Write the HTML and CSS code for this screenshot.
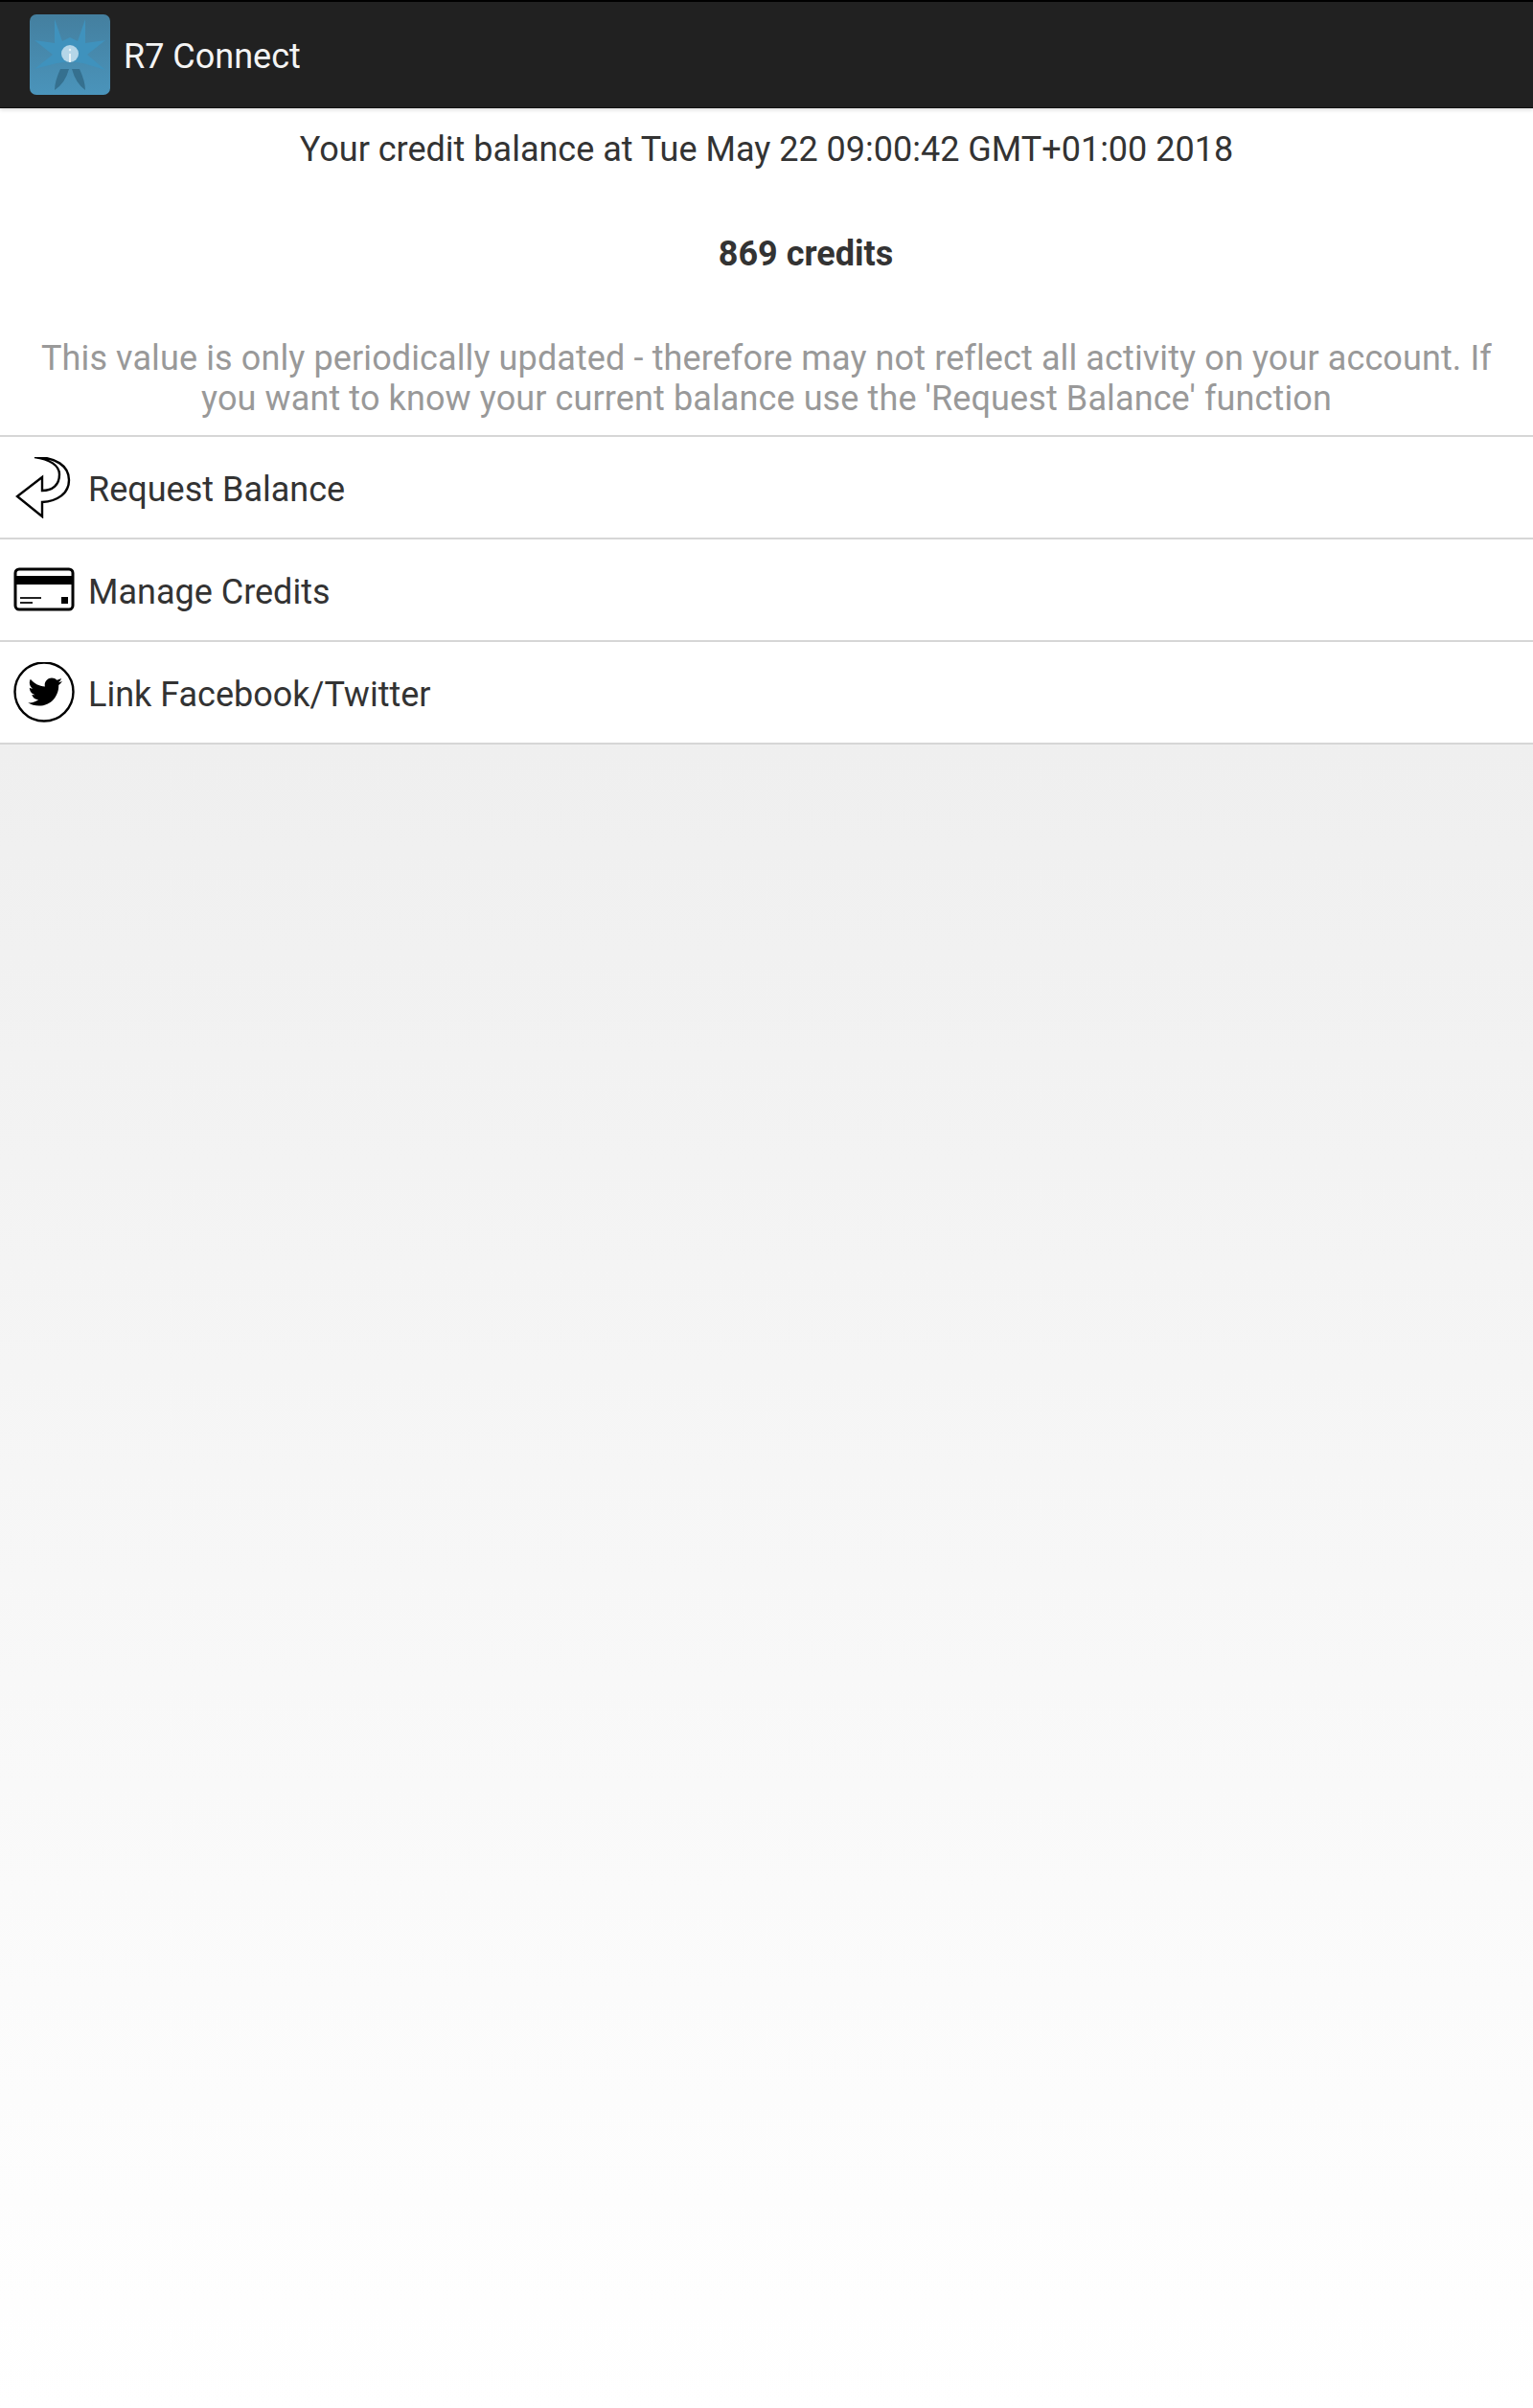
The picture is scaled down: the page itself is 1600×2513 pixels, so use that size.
FILE: index.html
```html
<!DOCTYPE html>
<html lang="en">
<head>
    <meta charset="UTF-8">
    <title>R7 Connect</title>
    <link rel="stylesheet" href="styles.css">
</head>
<body>
    <header class="app-bar">
        <svg class="app-logo" viewBox="0 0 84 84">
            <defs>
                <linearGradient id="logo-bg" x1="0" y1="0" x2="0" y2="1">
                    <stop offset="0" stop-color="#447f9f"/>
                    <stop offset="1" stop-color="#4a94bb"/>
                </linearGradient>
            </defs>
            <rect width="84" height="84" rx="7" fill="url(#logo-bg)"/>
            <path d="M26 5 L34 28 L42 24 L50 28 L58 5 L58 30 L79 27 L60 42 L79 58 L56 51 L42 49 L28 51 L5 57 L24 42 L5 27 L26 30 Z" fill="#3f92bd"/>
            <path d="M32 57 L41 57 Q37 72 26 79 Q26 70 32 57 Z M44 57 L52 57 Q58 70 58 79 Q48 72 44 57 Z" fill="#35708f"/>
            <circle cx="42" cy="41" r="9" fill="#b5d6e8"/>
            <rect x="41" y="41" width="2" height="9" fill="#e8f3f8"/>
            <circle cx="42" cy="37" r="1.2" fill="#e8f3f8"/>
        </svg>
        <span class="app-title">R7 Connect</span>
    </header>

    <main>
        <section class="balance">
            <p class="balance-date">Your credit balance at Tue May 22 09:00:42 GMT+01:00 2018</p>
            <p class="balance-value">869 credits</p>
            <p class="balance-note">This value is only periodically updated - therefore may not reflect all activity on your account. If you want to know your current balance use the 'Request Balance' function</p>
        </section>

        <ul class="menu">
            <li class="menu-row">
                <svg class="menu-icon" viewBox="0 0 64 64">
                    <path d="M22 0 C44 0 58 9 58 24 C58 38 46 46 30 47 L30 62 L4 41 L30 21 L30 35 C41 35 48 29 48 18 C48 9 38 2 22 0 Z" fill="#fff" stroke="#000" stroke-width="2.4"/>
                </svg>
                <span>Request Balance</span>
            </li>
            <li class="menu-row">
                <svg class="menu-icon" viewBox="0 0 64 64">
                    <rect x="2" y="10" width="60" height="42" rx="4" fill="#fff" stroke="#000" stroke-width="3"/>
                    <rect x="2" y="17" width="60" height="9" fill="#000"/>
                    <rect x="7" y="39" width="22" height="2" fill="#222"/>
                    <rect x="7" y="44" width="13" height="2" fill="#222"/>
                    <rect x="50" y="39" width="7" height="7" fill="#000"/>
                </svg>
                <span>Manage Credits</span>
            </li>
            <li class="menu-row">
                <svg class="menu-icon" viewBox="0 0 64 64">
                    <circle cx="32" cy="31" r="30.5" fill="#fff" stroke="#000" stroke-width="2.4"/>
                    <path d="M51 20 C49.700 20.600 48.300 21 46.800 21.200 C48.300 20.300 49.500 18.800 50 17 C48.600 17.900 47 18.500 45.300 18.800 C44 17.300 42.100 16.500 40 16.500 C36 16.500 32.700 19.800 32.700 23.800 C32.700 24.400 32.800 24.900 32.900 25.500 C26.800 25.200 21.400 22.300 17.800 17.800 C17.200 18.900 16.800 20.200 16.800 21.500 C16.800 24 18.100 26.300 20.100 27.600 C18.900 27.600 17.800 27.200 16.800 26.700 C16.800 30.300 19.300 33.300 22.600 34 C21.500 34.300 20.400 34.300 19.300 34.100 C20.200 37 22.900 39.200 26.100 39.200 C23 41.600 19.200 42.700 15.300 42.300 C18.600 44.400 22.400 45.600 26.500 45.600 C39.900 45.600 47.200 34.500 47.200 24.900 L47.200 24 C48.600 23 49.900 21.600 51 20 Z" fill="#000"/>
                </svg>
                <span>Link Facebook/Twitter</span>
            </li>
        </ul>
    </main>
</body>
</html>
```

FILE: styles.css
```css
html, body {
    margin: 0;
    padding: 0;
}
body {
    font-family: Roboto, "Liberation Sans", sans-serif;
    height: 2513px;
    background: linear-gradient(#efefef 777px, #ffffff 100%);
    color: #333;
    overflow: hidden;
}
.app-bar {
    display: flex;
    align-items: center;
    height: 110px;
    padding-left: 31px;
    background-color: #212121;
    border-top: 2px solid #000;
    border-bottom: 1px solid #111;
    box-shadow: 0 2px 4px rgba(0, 0, 0, 0.12);
    position: relative;
}
.app-logo {
    width: 84px;
    height: 84px;
    margin-right: 14px;
}
.app-title {
    color: #f4f4f4;
    font-size: 36px;
    line-height: 42px;
    padding-top: 3px;
}
.balance {
    background-color: #fff;
    text-align: center;
    padding-top: 22px;
}
.balance p {
    margin: 0;
    font-size: 36px;
    line-height: 42px;
}
.balance .balance-date {
    padding: 0 10px;
}
.balance .balance-value {
    margin-top: 67px;
    padding-left: 82px;
    font-weight: 700;
}
.balance .balance-note {
    margin-top: 67px;
    padding: 0 16px 17px;
    color: #999;
    letter-spacing: 0.11px;
}
.menu {
    list-style: none;
    margin: 0;
    padding: 0;
    border-top: 2px solid #d6d6d6;
}
.menu-row {
    display: flex;
    align-items: center;
    height: 105px;
    background-color: #fff;
    border-bottom: 2px solid #d6d6d6;
    font-size: 36px;
}
.menu-row span {
    padding-top: 4px;
}
.menu-icon {
    width: 64px;
    height: 64px;
    margin: 0 14px;
    flex-shrink: 0;
}
```
